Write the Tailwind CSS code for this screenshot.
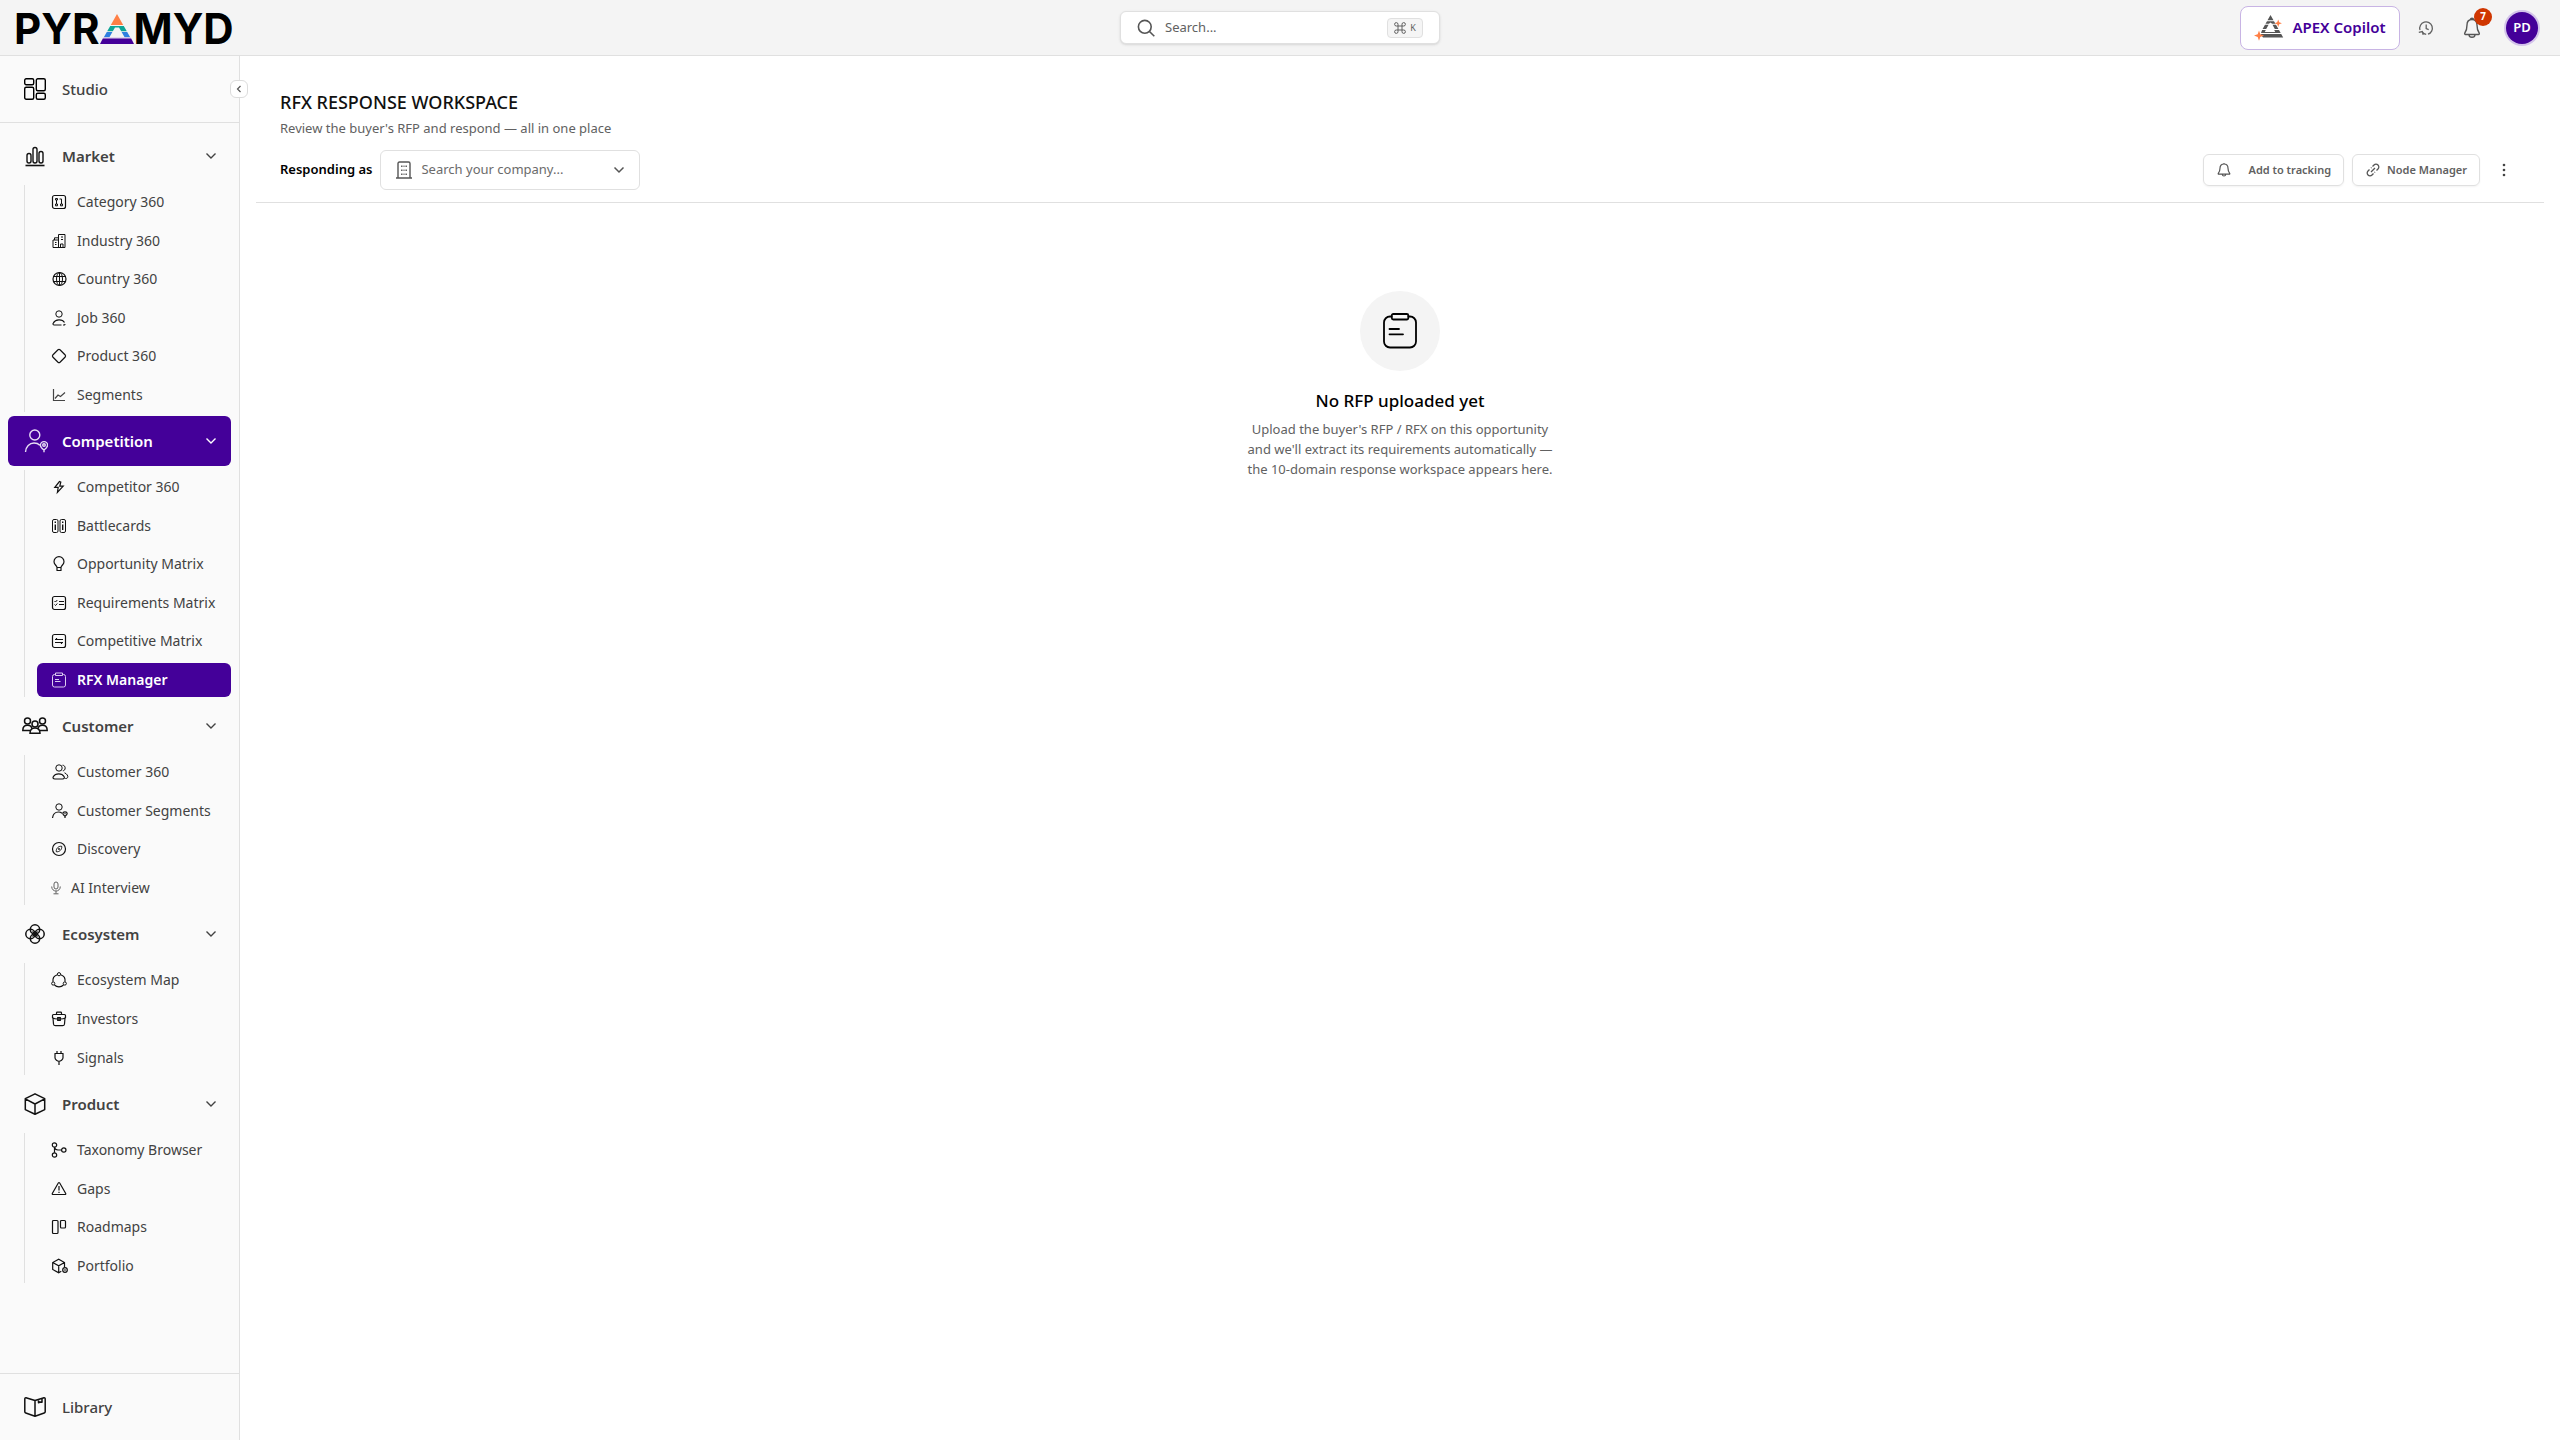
<!DOCTYPE html>
<html lang="en">

<head>
    <meta charset="UTF-8" />
    <meta name="viewport" content="width=device-width, initial-scale=1.0" />
    <title>RFX Response Workspace</title>
    <script src="https://cdn.jsdelivr.net/npm/@tailwindcss/browser@4"></script>
</head>

<body class="flex flex-col min-h-screen bg-white font-['Noto_Sans','Open_Sans',sans-serif] text-[#424242]">
    <!-- top bar -->
    <header class="grid grid-cols-[1fr_320px_1fr] items-center h-14 bg-[#f4f4f4] border-b border-[#e0e0e0]">
        <a href="#" aria-label="Pyramyd" class="flex items-center pl-3.5 pt-0.5 text-black font-['Inter',sans-serif] font-bold text-[42px] leading-none">
            <span>PYR</span>
            <svg class="w-[34px] h-[30px]" viewBox="0 0 34 30">
                <path fill="#ff7f45" d="M17 0l6.2 11H10.8z" />
                <path fill="#0fa596" d="M10.2 12h13.600l3 5.300h-5.600L19 13.500h-4l-2.200 3.800H7.200z" />
                <path fill="#2f80e0" d="M6.800 18h5.600l-3 5.300H3.800zM21.600 18h5.600l3 5.300h-5.600z" />
                <path fill="#cdbbe6" d="M3.400 23.500h27.200l.4 1H3z" />
                <path fill="#440099" d="M2.800 24.500h28.400L34 30H0z" />
            </svg>
            <span>MYD</span>
        </a>

        <label class="flex items-center h-[33px] gap-2.5 pl-4 pr-4 bg-white border border-[#e0e0e0] rounded-md shadow-sm">
            <svg class="w-[18px] h-[18px] shrink-0" viewBox="0 0 18 18" fill="none" stroke="#555" stroke-width="1.6">
                <circle cx="7.8" cy="7.8" r="6.4" />
                <path d="M12.500 12.500l4.800 4.800" />
            </svg>
            <input type="text" placeholder="Search..." aria-label="Search" class="flex-1 min-w-0 text-[13px] outline-none placeholder:text-[#616161]" />
            <kbd class="flex items-center justify-center gap-1 w-9 h-5 bg-[#f5f5f5] border border-[#e0e0e0] rounded text-[#616161] font-['Noto_Sans',sans-serif] text-[9px]">
                <svg class="w-3 h-3" viewBox="0 0 12 12" fill="none" stroke="currentColor">
                    <path d="M4 4h4v4H4zM4 4H2.300A1.700 1.700 0 1 1 4 2.300zM8 4V2.300A1.700 1.700 0 1 1 9.700 4zM8 8h1.700A1.700 1.700 0 1 1 8 9.700zM4 8v1.700A1.700 1.700 0 1 1 2.300 8z" />
                </svg>
                K
            </kbd>
        </label>

        <div class="flex items-center justify-end pr-[22px]">
            <button type="button" class="flex items-center justify-center gap-2 w-40 h-11 bg-white border border-[#c8b4e4] rounded-lg text-[#440099] text-[15px] font-semibold">
                <svg class="w-[30px] h-7" viewBox="0 0 30 28">
                    <path fill="#555" d="M16.500 1l3 5.300h-6zM13 7.200h7l1.500 2.600h-3.400l-1.600-1.200-1.600 1.200h-3.400zM11 10.700h3.600l-2.400 4.300H8.600zM18.500 10.700H22l2.400 4.300h-3.600zM8.100 16h3.700l-1 2h10.400l-1-2H25l1.700 3H7zM6.500 20H27.200l2 3.500H9z" />
                    <path fill="#ff7f45" d="M24.200 5.500l1 2.700 2.700 1-2.700 1-1 2.700-1-2.700-2.700-1 2.700-1zM5 16.500l1.300 3.800 3.800 1.300-3.800 1.300L5 26.700l-1.300-3.800L0 21.600l3.700-1.300z" />
                </svg>
                APEX Copilot
            </button>
            <button type="button" aria-label="History" class="flex items-center justify-center w-8 h-8 ml-2.5">
                <svg class="w-4 h-4" viewBox="0 0 16 16" fill="none" stroke="#616161" stroke-width="1.3">
                    <path d="M2 10A6.300 6.300 0 1 1 10 14.200M.8 12.300l3.500-.8.9 3.200M4.300 11.800Q5.600 14 8.200 14.400" />
                    <path d="M8.200 4.500v4l2.500 1.200" />
                </svg>
            </button>
            <button type="button" aria-label="Notifications, 7 unread" class="relative flex items-center justify-center w-8 h-8 ml-3.5">
                <svg class="w-[18px] h-[22px]" viewBox="0 0 18 22" fill="none" stroke="#555" stroke-width="1.4">
                    <path d="M9 2.500c-3.300 0-5 2.300-5 5.500 0 5-1 6.500-2.200 8-.4.700 0 1.500.7 1.500h13c.7 0 1.100-.8.7-1.500C15 14.500 14 13 14 8c0-3.200-1.700-5.500-5-5.500zM7.500 2.500C7.500.6 10.500.6 10.500 2.500M6 18c.3 3 5.700 3 6 0" />
                </svg>
                <span class="absolute -top-1 -right-1 flex items-center justify-center w-[18px] h-[18px] rounded-full bg-[#cf3600] text-white text-[10px] font-bold">7</span>
            </button>
            <button type="button" aria-label="Account" class="flex items-center justify-center w-8 h-8 ml-[18px] rounded-full bg-[#440099] ring-2 ring-[#d3c3ea] text-white text-[13px] font-semibold">PD</button>
        </div>
    </header>

    <div class="flex flex-1">
        <!-- sidebar -->
        <aside class="relative flex flex-col w-60 shrink-0 bg-[#fafafa] border-r border-[#e0e0e0] text-[15px]">
            <button type="button" aria-label="Collapse sidebar" class="absolute top-6 -right-[9px] flex items-center justify-center w-[18px] h-[18px] bg-white border border-[#dcdcdc] rounded-md">
                <svg class="w-2 h-2" viewBox="0 0 8 8" fill="none" stroke="#555" stroke-width="1.2"><path d="M5.500 1L2.500 4l3 3" /></svg>
            </button>

            <div class="p-2 border-b border-[#e0e0e0]">
                <a href="#" class="flex items-center gap-4 h-[50px] px-4 font-medium">
                    <svg class="w-[22px] h-[22px]" viewBox="0 0 22 22" fill="none" stroke="#000" stroke-width="1.4">
                        <rect x=".7" y=".7" width="9" height="6" rx="1.5" /><rect x=".7" y="9.2" width="9" height="12" rx="1.5" />
                        <rect x="12.3" y=".7" width="9" height="12" rx="1.5" /><rect x="12.3" y="15.2" width="9" height="6" rx="1.5" />
                    </svg>
                    Studio
                </a>
            </div>

            <nav class="flex flex-col flex-1 gap-1 p-2 stroke-[#111]">
                <button type="button" class="flex items-center gap-4 h-[50px] pl-4 pr-3 rounded-md font-semibold">
                    <svg class="w-[22px] h-[22px]" viewBox="0 0 22 22" fill="none" stroke="#111" stroke-width="1.4">
                        <path d="M1.500 20.500h19" stroke-width="1.6" /><rect x="3" y="8.5" width="4" height="9.5" rx="2" /><rect x="9" y="2.5" width="4" height="15.5" rx="2" /><rect x="15" y="6.5" width="4" height="11.5" rx="2" />
                    </svg>
                    Market
                    <svg class="w-4 h-4 ml-auto" viewBox="0 0 16 16" fill="none" stroke="#424242" stroke-width="1.4"><path d="M3.500 5.500L8 10l4.500-4.500" /></svg>
                </button>
                <ul class="grid auto-rows-fr gap-1 min-h-[227px] ml-4 pl-3 border-l border-[#e0e0e0] text-sm">
                    <li class="flex"><a href="#" class="flex flex-1 items-center gap-2.5 px-3.5">
                        <svg class="w-4 h-4" viewBox="0 0 16 16" fill="none"><rect x="1.5" y="1.5" width="13" height="13" rx="2" stroke-width="1.2" /><path d="M4.500 4.500h2v1.500h-2zM5.500 6v4M4.500 10h2v1.800h-2zM10.500 6v4M9.500 10h2v1.800h-2zM8.500 5h2v1" /></svg>
                        Category 360</a></li>
                    <li class="flex"><a href="#" class="flex flex-1 items-center gap-2.5 px-3.5">
                        <svg class="w-4 h-4" viewBox="0 0 16 16" fill="none"><path d="M2 14.500V7h5.500v7.500M3.500 7V4.800h4M7.500 7V1.500H14v13H2M4 9.500h1.500M4 11.500h1.500M10 4h2M10 6.500h2M9.500 14v-3h2.500v3" /></svg>
                        Industry 360</a></li>
                    <li class="flex"><a href="#" class="flex flex-1 items-center gap-2.5 px-3.5">
                        <svg class="w-4 h-4" viewBox="0 0 16 16" fill="none"><circle cx="8.5" cy="8" r="6.5" stroke-width="1.2" /><ellipse cx="8.5" cy="8" rx="3" ry="6.5" /><path d="M2.500 5.500h12M2.500 10.500h12M8.500 1.500v13" /></svg>
                        Country 360</a></li>
                    <li class="flex"><a href="#" class="flex flex-1 items-center gap-2.5 px-3.5">
                        <svg class="w-4 h-4" viewBox="0 0 16 16" fill="none"><circle cx="8" cy="4" r="3.2" /><path d="M10.500 15H3.300c-1.300 0-1.600-1-1-2 2.200-4 9-4.300 11.200-.5M12 15h1.500l.8-.8" stroke-width="1.2" /></svg>
                        Job 360</a></li>
                    <li class="flex"><a href="#" class="flex flex-1 items-center gap-2.5 px-3.5">
                        <svg class="w-4 h-4" viewBox="0 0 16 16" fill="none"><path d="M7 1.800q1-.8 2 0L14.200 7q.8 1 0 2L9 14.200q-1 .8-2 0L1.800 9q-.8-1 0-2z" stroke-width="1.2" /></svg>
                        Product 360</a></li>
                    <li class="flex"><a href="#" class="flex flex-1 items-center gap-2.5 px-3.5">
                        <svg class="w-4 h-4" viewBox="0 0 16 16" fill="none" stroke="#444"><path d="M2.500 2v11.500H14M4 11.500l3-3.500 2.500 1.500L14 5.500" stroke-width="1.2" /></svg>
                        Segments</a></li>
                </ul>

                <button type="button" class="flex items-center gap-4 h-[50px] pl-4 pr-3 rounded-md bg-[#440099] text-white font-semibold">
                    <svg class="w-6 h-6 -mr-0.5" viewBox="0 0 24 24" fill="none" stroke="#e8def5" stroke-width="1.4">
                        <circle cx="10.8" cy="6" r="5" /><path d="M1.500 23c.3-5.500 4-9 8.500-9 2.500 0 4.500.8 5.800 2.200M20 23.200v-2.200c-2-1.500-3.600-3-3.600-4.800a3.600 3.600 0 0 1 7.200 0c0 1.800-1.600 3.300-3.600 4.800" /><circle cx="20" cy="16" r="1.3" />
                    </svg>
                    Competition
                    <svg class="w-4 h-4 ml-auto" viewBox="0 0 16 16" fill="none" stroke="#fff" stroke-width="1.4"><path d="M3.500 5.500L8 10l4.500-4.500" /></svg>
                </button>
                <ul class="grid auto-rows-fr gap-1 min-h-[227px] ml-4 pl-3 border-l border-[#e0e0e0] text-sm">
                    <li class="flex"><a href="#" class="flex flex-1 items-center gap-2.5 px-3.5">
                        <svg class="w-4 h-4" viewBox="0 0 16 16" fill="none"><path d="M8.500 2.500L3.800 8.300h3.400l-.8 5.200 5.800-6.300H8.800l1-4.200z" stroke-width="1.2" /></svg>
                        Competitor 360</a></li>
                    <li class="flex"><a href="#" class="flex flex-1 items-center gap-2.5 px-3.5">
                        <svg class="w-4 h-4" viewBox="0 0 16 16" fill="none"><rect x="1.5" y="1.5" width="5.5" height="13" rx="1.5" /><rect x="9" y="1.5" width="5.5" height="13" rx="1.5" /><path d="M4.300 3.500v1.500M4.300 6.500v5.500M11.700 3.500v1.500M11.700 6.500v5.500" stroke-width="1.4" /></svg>
                        Battlecards</a></li>
                    <li class="flex"><a href="#" class="flex flex-1 items-center gap-2.5 px-3.5">
                        <svg class="w-4 h-4" viewBox="0 0 16 16" fill="none"><path d="M6 11.500c0-2-3-2.800-3-5.800a5 5 0 0 1 10 0c0 3-3 3.800-3 5.800zM5.500 14.500h5M6 11.500v3M10 11.500v3" stroke-width="1.2" /></svg>
                        Opportunity Matrix</a></li>
                    <li class="flex"><a href="#" class="flex flex-1 items-center gap-2.5 px-3.5">
                        <svg class="w-4 h-4" viewBox="0 0 16 16" fill="none"><rect x="1.5" y="1.5" width="13" height="13" rx="2" stroke-width="1.2" /><path d="M3.500 6l1 1 1.800-2M3.500 9.500l1 1 1.800-2M8 6.500h5M8 9.500h5" /></svg>
                        Requirements Matrix</a></li>
                    <li class="flex"><a href="#" class="flex flex-1 items-center gap-2.5 px-3.5">
                        <svg class="w-4 h-4" viewBox="0 0 16 16" fill="none"><rect x="1.5" y="1.5" width="13" height="13" rx="2" stroke-width="1.2" /><path d="M4 6.500h8M5.500 5v1.500M4 9.500h8M10.500 9.500V11" stroke-width="1.2" /></svg>
                        Competitive Matrix</a></li>
                    <li class="flex"><a href="#" aria-current="page" class="flex flex-1 items-center gap-2.5 px-3.5 rounded-md bg-[#440099] text-white font-semibold">
                        <svg class="w-4 h-4" viewBox="0 0 16 16" fill="none" stroke="#dccdf0"><path d="M4.500 2.500H3.500a2 2 0 0 0-2 2v8.500a2 2 0 0 0 2 2h9a2 2 0 0 0 2-2V4.500a2 2 0 0 0-2-2h-1M4.500 1h7v2.500h-7zM4 7.500h4M4 9.500h5.500" /></svg>
                        RFX Manager</a></li>
                </ul>

                <button type="button" class="flex items-center gap-4 h-[50px] pl-4 pr-3 rounded-md font-semibold">
                    <svg class="w-[26px] h-[22px] -mx-0.5" viewBox="0 0 26 22" fill="#fafafa" stroke="#111" stroke-width="1.5">
                        <path d="M.8 15.500c0-3.200 2-5.200 4.700-5.200s4.700 2 4.700 5.200zM15.800 15.500c0-3.200 2-5.200 4.700-5.200s4.700 2 4.700 5.200z" />
                        <circle cx="5.500" cy="6" r="3" /><circle cx="20.500" cy="6" r="3" />
                        <path d="M8 18.300c0-3.500 2-5.300 5-5.300s5 1.800 5 5.300z" /><circle cx="13" cy="9" r="3" />
                    </svg>
                    Customer
                    <svg class="w-4 h-4 ml-auto" viewBox="0 0 16 16" fill="none" stroke="#424242" stroke-width="1.4"><path d="M3.500 5.500L8 10l4.500-4.500" /></svg>
                </button>
                <ul class="grid auto-rows-fr gap-1 min-h-[150px] ml-4 pl-3 border-l border-[#e0e0e0] text-sm">
                    <li class="flex"><a href="#" class="flex flex-1 items-center gap-2.5 px-3.5">
                        <svg class="w-4 h-4 overflow-visible" viewBox="0 0 16 16" fill="none"><circle cx="8" cy="4" r="3.2" /><path d="M4 15c-2 0-2.400-1-1.600-2.500C4.500 9 11 9 13 12.500c.8 1.500.4 2.500-1.600 2.500z" stroke-width="1.2" /><path d="M11.500 1.200c3.500 0 3.500 5.600.3 5.600M13.500 8.800c3.500 1.200 5 6 .8 5.700" /></svg>
                        Customer 360</a></li>
                    <li class="flex"><a href="#" class="flex flex-1 items-center gap-2.5 px-3.5">
                        <svg class="w-4 h-4 overflow-visible" viewBox="0 0 16 16" fill="none"><circle cx="8" cy="4" r="3.2" /><path d="M1.500 15c.5-4 3-6 6-6 1.500 0 2.500.4 3.500 1.200M14 15v-1.700c-3.200-2-2.600-4.500 0-4.500s3.200 2.500 0 4.500M13.500 10.700h1" stroke-width="1.2" /></svg>
                        Customer Segments</a></li>
                    <li class="flex"><a href="#" class="flex flex-1 items-center gap-2.5 px-3.5">
                        <svg class="w-4 h-4" viewBox="0 0 16 16" fill="none"><circle cx="8" cy="8" r="6.5" stroke-width="1.2" /><path d="M5.300 10.700c-.6-3 2.400-6 5.400-5.400.6 3-2.400 6-5.400 5.400z" /><circle cx="8" cy="8" r=".6" /></svg>
                        Discovery</a></li>
                    <li class="flex"><a href="#" class="flex flex-1 items-center gap-2.5 px-3.5">
                        <svg class="w-2.5 h-3.5" viewBox="0 0 10 14" fill="none" stroke="#616161"><rect x="3" y="1" width="4" height="7" rx="2" /><path d="M.7 5.500c0 6 8.600 6 8.600 0M5 10v2.500M2.500 12.800h5" /></svg>
                        AI Interview</a></li>
                </ul>

                <button type="button" class="flex items-center gap-4 h-[50px] pl-4 pr-3 rounded-md font-semibold">
                    <svg class="w-[22px] h-[22px]" viewBox="0 0 22 22" fill="none" stroke="#111" stroke-width="1.5">
                        <circle cx="11" cy="6.5" r="4.7" /><circle cx="11" cy="15.5" r="4.7" /><circle cx="6.5" cy="11" r="4.7" /><circle cx="15.5" cy="11" r="4.7" /><path d="M8.500 8.500l5 5M13.500 8.500l-5 5" />
                    </svg>
                    Ecosystem
                    <svg class="w-4 h-4 ml-auto" viewBox="0 0 16 16" fill="none" stroke="#424242" stroke-width="1.4"><path d="M3.500 5.500L8 10l4.500-4.500" /></svg>
                </button>
                <ul class="grid auto-rows-fr gap-1 min-h-[112px] ml-4 pl-3 border-l border-[#e0e0e0] text-sm">
                    <li class="flex"><a href="#" class="flex flex-1 items-center gap-2.5 px-3.5">
                        <svg class="w-4 h-4" viewBox="0 0 16 16" fill="none"><circle cx="8" cy="2.2" r="1.6" /><circle cx="2.2" cy="11.5" r="1.6" /><circle cx="13.8" cy="11.5" r="1.6" /><path d="M6.300 2.700c-3 1-4.800 3.800-4.300 7M9.700 2.700c3 1 4.800 3.800 4.300 7M3.500 13c2.500 2.600 6.500 2.600 9 0" stroke-width="1.2" /></svg>
                        Ecosystem Map</a></li>
                    <li class="flex"><a href="#" class="flex flex-1 items-center gap-2.5 px-3.5">
                        <svg class="w-4 h-4" viewBox="0 0 16 16" fill="none"><path d="M1.500 4.500q0-1 1-1h11q1 0 1 1v2.200Q12.500 8 9.500 8h-3Q3.500 8 1.500 6.700zM2 7l.5 6q.2 1.700 2 1.700h7q1.800 0 2-1.700l.5-6M5.500 3.500V2q0-.8.8-.8h3.400q.8 0 .8.800v1.500M6.700 6.700h2.600v2.600H6.700z" stroke-width="1.2" /></svg>
                        Investors</a></li>
                    <li class="flex"><a href="#" class="flex flex-1 items-center gap-2.5 px-3.5">
                        <svg class="w-4 h-4" viewBox="0 0 16 16" fill="none"><path d="M3.500 3.500h9M4 3.500v4.300c0 2 2.500 3.500 4 3.500s4-1.500 4-3.500V3.500M6 1v2.500M10 1v2.500M8 11.500V15" stroke-width="1.2" /></svg>
                        Signals</a></li>
                </ul>

                <button type="button" class="flex items-center gap-4 h-[50px] pl-4 pr-3 rounded-md font-semibold">
                    <svg class="w-[22px] h-[22px]" viewBox="0 0 22 22" fill="none" stroke="#111" stroke-width="1.5" stroke-linejoin="round">
                        <path d="M11 .8l9.700 4.800v11L11 21.200l-9.700-4.600v-11zM1.300 5.800L11 11l9.700-5.200M11 11v10.200" />
                    </svg>
                    Product
                    <svg class="w-4 h-4 ml-auto" viewBox="0 0 16 16" fill="none" stroke="#424242" stroke-width="1.4"><path d="M3.500 5.500L8 10l4.500-4.500" /></svg>
                </button>
                <ul class="grid auto-rows-fr gap-1 min-h-[150px] ml-4 pl-3 border-l border-[#e0e0e0] text-sm">
                    <li class="flex"><a href="#" class="flex flex-1 items-center gap-2.5 px-3.5">
                        <svg class="w-4 h-4" viewBox="0 0 16 16" fill="none" stroke-width="1.2"><circle cx="3.5" cy="3" r="2.2" /><circle cx="3.5" cy="13" r="2.2" /><circle cx="12.8" cy="8" r="2.2" /><path d="M3.500 5.200v5.600M3.500 5.200c.3 2 1.500 2.800 3.500 2.800h3.600" /></svg>
                        Taxonomy Browser</a></li>
                    <li class="flex"><a href="#" class="flex flex-1 items-center gap-2.5 px-3.5">
                        <svg class="w-4 h-4" viewBox="0 0 16 16" fill="none"><path d="M7.300 2q.7-1 1.400 0l6 10.500q.4 1-.7 1H2q-1.100 0-.7-1zM8 5v4.500M8 10.800v1.200" stroke-width="1.2" /></svg>
                        Gaps</a></li>
                    <li class="flex"><a href="#" class="flex flex-1 items-center gap-2.5 px-3.5">
                        <svg class="w-4 h-4" viewBox="0 0 16 16" fill="none" stroke-width="1.2"><rect x="1.5" y="1.5" width="5.5" height="13" rx="1" /><rect x="9.5" y="1.5" width="5" height="7.500" rx="1" /></svg>
                        Roadmaps</a></li>
                    <li class="flex"><a href="#" class="flex flex-1 items-center gap-2.5 px-3.5">
                        <svg class="w-4 h-4 overflow-visible" viewBox="0 0 16 16" fill="none" stroke-width="1.2"><path d="M13.500 9V4.500L7.700 1.300 1.700 4.500v7l6 3.200 2.600-1.400M1.700 4.500l6 3.300 5.800-3.300M7.700 7.800v6.900" /><circle cx="14" cy="12" r="2.3" /><path d="M13 12h2" /></svg>
                        Portfolio</a></li>
                </ul>
            </nav>

            <div class="p-2 border-t border-[#e0e0e0]">
                <a href="#" class="flex items-center gap-4 h-[50px] px-4 font-medium">
                    <svg class="w-[22px] h-[22px]" viewBox="0 0 22 22" fill="none" stroke="#111" stroke-width="1.5" stroke-linejoin="round">
                        <path d="M11 4.500v15.700M11 4.500L2 1.700Q.8 1.500.8 3v12.700q0 1 1 1.300l9.200 3.200 9.200-3.200q1-.3 1-1.300V3q0-1.500-1.200-1.300L11 4.500M14.500 3.500v3.300l1.700-.8 1.800.2V2.500" />
                    </svg>
                    Library
                </a>
            </div>
        </aside>

        <!-- workspace -->
        <main class="flex-1 px-4 pt-8">
            <section class="px-6 pb-3 border-b border-[#e0e0e0]">
                <h1 class="text-lg leading-7 font-medium text-[#111]">RFX RESPONSE WORKSPACE</h1>
                <p class="text-[13px] leading-6 text-[#616161]">Review the buyer's RFP and respond — all in one place</p>
                <div class="flex items-center justify-between mt-2.5">
                    <div class="flex items-center gap-2">
                        <label for="company" class="text-[13px] font-semibold text-black">Responding as</label>
                        <div class="flex items-center w-[260px] h-10 pl-3.5 pr-3 border border-[#e0e0e0] rounded-md">
                            <svg class="w-[18px] h-[18px] shrink-0" viewBox="0 0 18 18" fill="none" stroke="#555" stroke-width="1.4">
                                <path d="M1 17h16M3 17V2.500Q3 1 4.500 1h9Q15 1 15 2.500V17" /><path stroke-dasharray="1.500 2.500" d="M6.800 4.500V14M11.200 4.500V14" /><path stroke-width="1" stroke-dasharray="1.500 2.500" d="M9 4.500V14" />
                            </svg>
                            <input id="company" type="text" placeholder="Search your company..." class="flex-1 min-w-0 ml-2 text-[13px] outline-none placeholder:text-[#6b6b6b]" />
                            <button type="button" aria-label="Show companies">
                                <svg class="w-4 h-4" viewBox="0 0 16 16" fill="none" stroke="#555" stroke-width="1.5"><path d="M3.500 5.500L8 10l4.500-4.500" /></svg>
                            </button>
                        </div>
                    </div>
                    <div class="flex items-center gap-2 text-[11px] font-semibold text-[#616161]">
                        <button type="button" class="flex items-center gap-4 h-8 px-3 border border-[#e0e0e0] rounded-md shadow-xs">
                            <svg class="w-4 h-4" viewBox="0 0 16 16" fill="none" stroke="#555" stroke-width="1.2"><path d="M8 2C5.500 2 4 3.800 4 6.200c0 3-.8 4-1.700 5.100-.3.500 0 .9.400.9h10.600c.4 0 .7-.4.400-.9-.9-1.100-1.700-2.100-1.700-5.100C12 3.800 10.500 2 8 2zM8 2V1M6.300 12.500c.2 2 3.200 2 3.400 0" /></svg>
                            Add to tracking
                        </button>
                        <button type="button" class="flex items-center gap-1.5 h-8 px-3 border border-[#e0e0e0] rounded-md shadow-xs">
                            <svg class="w-4 h-4" viewBox="0 0 16 16" fill="none" stroke="#555" stroke-width="1.3"><path d="M6 10l4-4M7.500 4.500L9 3a2.800 2.800 0 0 1 4 4l-1.500 1.500M10 10l-.5.500M4.500 7.500L3 9a2.800 2.800 0 0 0 4 4l1.500-1.500M6 6l.5-.5" /></svg>
                            Node Manager
                        </button>
                        <button type="button" aria-label="More actions" class="flex items-center justify-center w-8 h-8">
                            <svg class="w-4 h-4" viewBox="0 0 16 16" fill="#444"><circle cx="8" cy="3" r="1.3" /><circle cx="8" cy="8" r="1.3" /><circle cx="8" cy="13" r="1.3" /></svg>
                        </button>
                    </div>
                </div>
            </section>

            <!-- empty state -->
            <section class="flex flex-col items-center pt-[88px] text-center">
                <div class="flex items-center justify-center w-20 h-20 rounded-full bg-[#f4f4f4]">
                    <svg class="w-9 h-9" viewBox="0 0 36 36" fill="none" stroke="#000" stroke-width="1.8" stroke-linecap="round">
                        <path d="M9.500 3.500H8A6 6 0 0 0 2 9.500v19a6 6 0 0 0 6 6h20a6 6 0 0 0 6-6v-19a6 6 0 0 0-6-6h-1.500" /><rect x="9.8" y="1" width="16.5" height="5.500" rx="1.5" /><path d="M7.500 16H17M7.500 21.300h13.500" />
                    </svg>
                </div>
                <h2 class="mt-4 text-[17px] leading-7 font-medium text-black">No RFP uploaded yet</h2>
                <p class="mt-1 max-w-80 text-[13px] leading-5 text-[#616161]">Upload the buyer's RFP / RFX on this opportunity and we'll extract its requirements automatically — the 10-domain response workspace appears here.</p>
            </section>
        </main>
    </div>
</body>

</html>
